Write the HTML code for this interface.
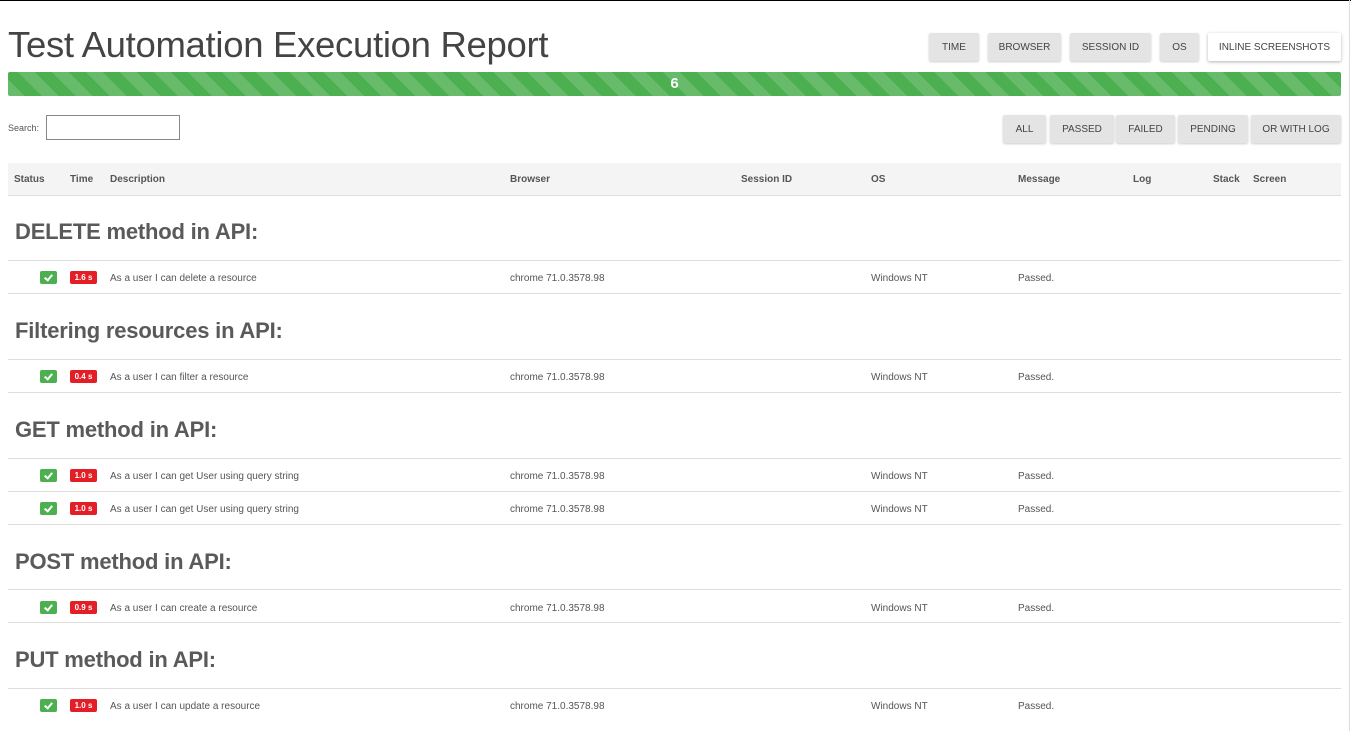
<!DOCTYPE html>
<html><head><meta charset="utf-8"><style>
*{margin:0;padding:0;box-sizing:border-box}
body{width:1351px;height:731px;overflow:hidden;background:#fff;font-family:"Liberation Sans",sans-serif;color:#555;position:relative}
.a{position:absolute;white-space:nowrap}
.top{left:0;top:0;width:1351px;height:1px;background:#000}
.vr{left:1349px;top:0;width:1px;height:731px;background:#ddd}
h1{position:absolute;left:8px;top:24px;font-size:36.5px;font-weight:normal;color:#444;letter-spacing:-0.3px;white-space:nowrap}
.bar{left:8px;top:72px;width:1333px;height:24px;border-radius:2px;background:#4caf50;background-image:repeating-linear-gradient(45deg,rgba(255,255,255,.15) 0 12px,transparent 12px 24px)}
.bar span{position:absolute;left:0;right:0;top:3px;text-align:center;color:#fff;font-weight:bold;font-size:15px}
.btn{position:absolute;height:28px;background:#e4e4e4;border-radius:2px;box-shadow:0 1px 2px rgba(0,0,0,.2);font-size:10px;color:#444;text-align:center;line-height:30px}
.btn.w{background:#fff;box-shadow:0 1px 3px rgba(0,0,0,.3)}
.srch{left:8px;top:123px;font-size:9px;color:#555}
.inp{left:46px;top:115px;width:134px;height:25px;border:1px solid #888}
.thead{left:8px;top:163px;width:1333px;height:33px;background:#f4f4f4;border-bottom:1px solid #ddd}
.th{position:absolute;top:174px;font-size:10px;font-weight:bold;color:#555}
h2{position:absolute;left:15px;font-size:22px;font-weight:bold;color:#5a5a5a;letter-spacing:-0.2px}
.ln{position:absolute;left:8px;width:1333px;height:1px;background:#ddd}
.ok{position:absolute;left:40px;width:17px;height:13px;background:#4caf50;border-radius:2px}
.ok:after{content:"";position:absolute;left:6px;top:2px;width:3px;height:6px;border:solid #fff;border-width:0 2px 2px 0;transform:rotate(40deg)}
.tm{position:absolute;left:70px;width:27px;height:13px;background:#e41e26;border-radius:2px;color:#fff;font-size:8px;font-weight:bold;text-align:center;line-height:13px}
.tx{position:absolute;font-size:10px;color:#555;margin-top:1px}
</style></head><body>
<div class="a top"></div><div class="a vr"></div>
<h1>Test Automation Execution Report</h1>
<div class="btn" style="left:929px;top:33px;width:50px">TIME</div>
<div class="btn" style="left:988px;top:33px;width:73px">BROWSER</div>
<div class="btn" style="left:1070px;top:33px;width:81px">SESSION ID</div>
<div class="btn" style="left:1160px;top:33px;width:39px">OS</div>
<div class="btn w" style="left:1208px;top:33px;width:133px">INLINE SCREENSHOTS</div>
<div class="a bar"><span>6</span></div>
<div class="a srch">Search:</div><div class="a inp"></div>
<div class="btn" style="left:1003px;top:115px;width:43px">ALL</div>
<div class="btn" style="left:1050px;top:115px;width:64px">PASSED</div>
<div class="btn" style="left:1116px;top:115px;width:59px">FAILED</div>
<div class="btn" style="left:1178px;top:115px;width:70px">PENDING</div>
<div class="btn" style="left:1251px;top:115px;width:90px">OR WITH LOG</div>
<div class="a thead"></div>
<div class="th" style="left:14px">Status</div>
<div class="th" style="left:70px">Time</div>
<div class="th" style="left:110px">Description</div>
<div class="th" style="left:510px">Browser</div>
<div class="th" style="left:741px">Session ID</div>
<div class="th" style="left:871px">OS</div>
<div class="th" style="left:1018px">Message</div>
<div class="th" style="left:1133px">Log</div>
<div class="th" style="left:1213px">Stack</div>
<div class="th" style="left:1253px">Screen</div>

<h2 style="top:219px">DELETE method in API:</h2>
<div class="ln" style="top:260px"></div>
<div class="ok" style="top:271px"></div><div class="tm" style="top:271px">1.6 s</div>
<div class="tx" style="left:110px;top:272px">As a user I can delete a resource</div>
<div class="tx" style="left:510px;top:272px">chrome 71.0.3578.98</div>
<div class="tx" style="left:871px;top:272px">Windows NT</div>
<div class="tx" style="left:1018px;top:272px">Passed.</div>
<div class="ln" style="top:293px"></div>

<h2 style="top:318px">Filtering resources in API:</h2>
<div class="ln" style="top:359px"></div>
<div class="ok" style="top:370px"></div><div class="tm" style="top:370px">0.4 s</div>
<div class="tx" style="left:110px;top:371px">As a user I can filter a resource</div>
<div class="tx" style="left:510px;top:371px">chrome 71.0.3578.98</div>
<div class="tx" style="left:871px;top:371px">Windows NT</div>
<div class="tx" style="left:1018px;top:371px">Passed.</div>
<div class="ln" style="top:392px"></div>

<h2 style="top:417px">GET method in API:</h2>
<div class="ln" style="top:458px"></div>
<div class="ok" style="top:469px"></div><div class="tm" style="top:469px">1.0 s</div>
<div class="tx" style="left:110px;top:470px">As a user I can get User using query string</div>
<div class="tx" style="left:510px;top:470px">chrome 71.0.3578.98</div>
<div class="tx" style="left:871px;top:470px">Windows NT</div>
<div class="tx" style="left:1018px;top:470px">Passed.</div>
<div class="ln" style="top:491px"></div>
<div class="ok" style="top:502px"></div><div class="tm" style="top:502px">1.0 s</div>
<div class="tx" style="left:110px;top:503px">As a user I can get User using query string</div>
<div class="tx" style="left:510px;top:503px">chrome 71.0.3578.98</div>
<div class="tx" style="left:871px;top:503px">Windows NT</div>
<div class="tx" style="left:1018px;top:503px">Passed.</div>
<div class="ln" style="top:524px"></div>

<h2 style="top:549px">POST method in API:</h2>
<div class="ln" style="top:589px"></div>
<div class="ok" style="top:601px"></div><div class="tm" style="top:601px">0.9 s</div>
<div class="tx" style="left:110px;top:602px">As a user I can create a resource</div>
<div class="tx" style="left:510px;top:602px">chrome 71.0.3578.98</div>
<div class="tx" style="left:871px;top:602px">Windows NT</div>
<div class="tx" style="left:1018px;top:602px">Passed.</div>
<div class="ln" style="top:622px"></div>

<h2 style="top:647px">PUT method in API:</h2>
<div class="ln" style="top:688px"></div>
<div class="ok" style="top:699px"></div><div class="tm" style="top:699px">1.0 s</div>
<div class="tx" style="left:110px;top:700px">As a user I can update a resource</div>
<div class="tx" style="left:510px;top:700px">chrome 71.0.3578.98</div>
<div class="tx" style="left:871px;top:700px">Windows NT</div>
<div class="tx" style="left:1018px;top:700px">Passed.</div>
</body></html>
